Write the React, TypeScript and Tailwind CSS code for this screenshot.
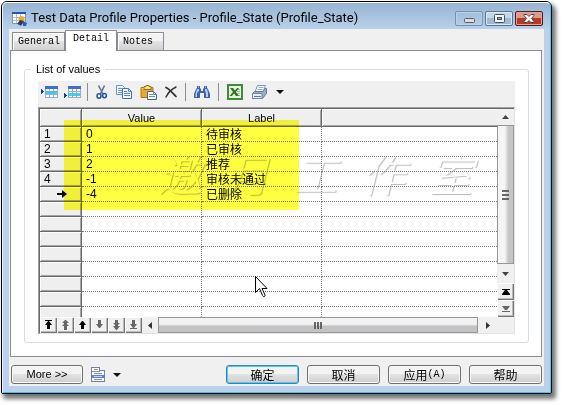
import React from 'react';

const rows: { head: string; value: string; label: string }[] = [
  { head: '1', value: '0', label: '待审核' },
  { head: '2', value: '1', label: '已审核' },
  { head: '3', value: '2', label: '推荐' },
  { head: '4', value: '-1', label: '审核未通过' },
  { head: 'current', value: '-4', label: '已删除' },
  ...Array.from({ length: 7 }, () => ({ head: '', value: '', label: '' })),
];

const latin = "font-['Liberation_Sans','Noto_Sans_CJK_SC',sans-serif]";
const headCell =
  'border-r border-b border-[#696969] bg-[#efefef] shadow-[inset_1px_1px_0_#fff,inset_-1px_-1px_0_#a5a5a5] p-0 font-normal';
const dotCell = 'border-b border-dotted border-[#7c7c7c] p-0 pl-1 whitespace-nowrap';

function GridIcon({ low }: { low?: boolean }) {
  return (
    <svg width="17" height="15" viewBox="0 0 17 15" shapeRendering="crispEdges">
      <rect x="4" y="1" width="12" height="12" fill="#fff" stroke="none" />
      <rect x="4" y="1" width="13" height="3" fill="#3f6fc8" />
      <rect x="4" y={low ? 8 : 6} width="12" height="3" fill="#35d8ee" />
      <path d="M4.5 4v9M8.5 4v9M12.5 4v9M16.5 4v9M4 6.5h12M4 9.5h12M4 12.5h13" stroke="#7c9bc8" strokeOpacity=".8" fill="none" />
      {low && <path d="M5 9.500h3M9 9.500h3M13 9.500h3" stroke="#35d8ee" />}
      <path d={low ? 'M0 8h1v1h1v1h1v1H2v1H1v1H0z' : 'M0 4h1v1h1v1h1v1H2v1H1v1H0z'} fill="#163e96" />
    </svg>
  );
}

function ScissorsIcon() {
  return (
    <svg width="12" height="14" viewBox="0 0 12 14" fill="none">
      <path d="M2.5 0.5 7 9M8.5 0.5 4.5 9" stroke="#60749a" strokeWidth="1.6" />
      <ellipse cx="3" cy="11" rx="2" ry="2.2" stroke="#2450a8" strokeWidth="1.5" />
      <ellipse cx="8.5" cy="10.6" rx="1.9" ry="2.2" stroke="#2450a8" strokeWidth="1.5" />
    </svg>
  );
}

function CopyIcon() {
  return (
    <svg width="16" height="14" viewBox="0 0 16 14" fill="none">
      <path d="M.5.5h6l2 2v7h-8z" fill="#eef5ff" stroke="#6b94d2" />
      <path d="M2 3.5h4M2 5.5h4M2 7.5h4" stroke="#6d98d8" />
      <path d="M6.500 3.500h6l3 3v7h-9z" fill="#fff" stroke="#4172ba" />
      <path d="M12.500 3.500v3h3M8 6.500h3M8 8.500h6M8 10.500h6" stroke="#5387d0" />
    </svg>
  );
}

function PasteIcon() {
  return (
    <svg width="17" height="15" viewBox="0 0 17 15" fill="none">
      <path d="M1 2.500h12v10H1z" fill="#e8a92c" stroke="#b37817" />
      <path d="M2 3.500h9" stroke="#ffdc75" />
      <path d="M4 1.500h2v-1h3v1h2v3H4z" fill="#f6e08a" stroke="#99701e" />
      <path d="M7.500 6.500h6l3 3v5h-9z" fill="#fff" stroke="#49658b" />
      <path d="M9 9.500h4M9 11.500h6M13.500 6.500v3h3" stroke="#6d86ad" />
    </svg>
  );
}

function DeleteIcon() {
  return (
    <svg width="12" height="12" viewBox="0 0 12 12" fill="none" stroke="#333" strokeLinecap="round">
      <path d="M1 1.500c4 2 7 6 10 9" strokeWidth="1.700" />
      <path d="M11 1C7 3 3 7 1 11" strokeWidth="1.500" />
    </svg>
  );
}

function BinocularsIcon() {
  return (
    <svg width="16" height="14" viewBox="0 0 16 14">
      <path d="M3 1h3v2l1 1v2h2V4l1-1V1h3v2l1 1 2 5v4h-6V8H6v5H0V9l2-5 1-1z" fill="#3e62a4" />
      <path d="M3 4h2v2L3 8v4H1.500V9zM11 4h2l1 4v4h-2V8l-1-2z" fill="#b4ccf2" />
      <path d="M4 1.500h1v1H4zM11 1.500h1v1h-1zM7 5h2v1H7z" fill="#dce9fc" />
    </svg>
  );
}

function SheetIcon() {
  return (
    <svg width="16" height="16" viewBox="0 0 16 16">
      <rect x="1" y="1" width="14" height="14" fill="#e7f3e2" stroke="#3f8a38" strokeWidth="2" />
      <path d="M9 4h4v8H9z" fill="#fff" />
      <path d="M10 5.500h3M10 7.500h3M10 9.500h3M10 11.500h3" stroke="#8cc083" />
      <path d="M3 4h3l2 2.500L10 4h2L9 8l3 4H9L7 9.500 5 12H2.500L6 8z" fill="#277a23" />
    </svg>
  );
}

function PrinterIcon() {
  return (
    <svg width="17" height="15" viewBox="0 0 17 15">
      <path d="M6.500.500h8L12 7H4z" fill="#fff" stroke="#7f94b8" />
      <path d="M7.500 2.500h5M6.500 4.500h5" stroke="#8fafdf" />
      <path d="M1.500 8.500l2-2H12l2-3h1.500v5l-4 5h-10z" fill="#9dadc9" stroke="#63779b" />
      <path d="M1.500 8.500H11v5H1.500z" fill="#e6edf8" stroke="#7486a6" />
      <path d="M3 11.500h7" stroke="#5b76a8" />
    </svg>
  );
}

function Caret() {
  return (
    <svg width="8" height="4" viewBox="0 0 8 4">
      <path d="M0 0h8L4 4z" fill="#111" />
    </svg>
  );
}

function AppIcon() {
  return (
    <svg width="15" height="15" viewBox="0 0 15 15">
      <path d="M.5 1.500h13v11H.5z" fill="#fff" stroke="#8296bd" />
      <path d="M0 1h14v2H0z" fill="#2456b0" />
      <path d="M1 6.500h12M1 9.500h12M4.500 3v9M8.500 3v9" stroke="#a9b9d6" />
      <path d="M6 13l2-4 3 3-2 3zM11 10l4 2-1 3h-3z" fill="#2c5daf" />
      <circle cx="9.500" cy="8" r="3" fill="#f2ac20" />
      <path d="M5 13l3-4 4 1-3 4z" fill="#333e50" />
    </svg>
  );
}

function DocIcon() {
  return (
    <svg width="14" height="15" viewBox="0 0 14 15" shapeRendering="crispEdges">
      <path d="M.5.5h8v3h5v11H.5z" fill="#fff" stroke="#6c83a8" />
      <path d="M3 2.500h4M3 6.500h8M3 12.500h8M1 4.500h8" stroke="#8793a6" />
      <path d="M1 8h12v3H1z" fill="#5b7df5" />
      <path d="M3 9.500h8" stroke="#cbd6ff" />
    </svg>
  );
}

function Separator() {
  return <span className="h-[18px] w-px bg-[#8d8d8d]" />;
}

function ToolButton({ name, children }: { name: string; children: React.ReactNode }) {
  return (
    <button type="button" aria-label={name} className="flex h-5 shrink-0 items-center justify-center">
      {children}
    </button>
  );
}

const navIcons: { name: string; d: string; tone: string }[] = [
  { name: 'First row', d: 'M1 0h7v1H5L8 5H6v4H3V5H1l3-4H1z', tone: '#000' },
  { name: 'Page up', d: 'M4 0h1l3 3H6v1l2 2H6v4H3V6H1l2-2V3H1z', tone: '#666' },
  { name: 'Row up', d: 'M4 1h1l3 4H6v4H3V5H1z', tone: '#000' },
  { name: 'Row down', d: 'M3 0h3v4h2L5 8H4L1 4h2z', tone: '#666' },
  { name: 'Page down', d: 'M3 0h3v3h2L6 5v1h2L5 10H4L1 6h2V5L1 3h2z', tone: '#666' },
  { name: 'Last row', d: 'M3 0h3v4h2L5 8h3v1H1V8h3L1 4h2z', tone: '#666' },
];

const raised =
  'flex items-center justify-center bg-[#f0f0f0] shadow-[inset_1px_1px_0_#fff,inset_-1px_-1px_0_#777,inset_-2px_-2px_0_#bbb]';

function DialogButton({ children, primary }: { children: React.ReactNode; primary?: boolean }) {
  return (
    <button
      type="button"
      className={
        "flex h-[19px] w-[73px] items-center justify-center rounded-[3px] border bg-linear-to-b from-[#f3f3f3] from-45% via-[#e2e2e2] via-50% to-[#cfcfcf] text-xs leading-none whitespace-nowrap text-black font-['Noto_Sans_CJK_SC',sans-serif] " +
        (primary
          ? 'border-[#3c7fb1] shadow-[inset_0_0_0_1px_#48d0f5]'
          : 'border-[#707070] shadow-[inset_0_0_0_1px_#f8f8f8]')
      }
    >
      {children}
    </button>
  );
}

function SideTab({ children }: { children: React.ReactNode }) {
  return (
    <button
      type="button"
      role="tab"
      aria-selected="false"
      className="h-[18px] border border-b-0 border-[#898c95] bg-linear-to-b from-[#f3f3f3] from-45% via-[#e4e4e4] via-50% to-[#d2d2d2] pr-1 pl-[5px] shadow-[inset_1px_1px_0_#fff]"
    >
      {children}
    </button>
  );
}

export default function App() {
  return (
    <div className={'bg-white pt-px pr-[11px] pb-[11px] pl-px text-black ' + latin}>
      <main className="rounded-t-md rounded-b-xs border border-black bg-[#b9d1ea] shadow-[3px_4px_4px_1px_#777]">
        <div className="rounded-t-[5px] border border-t-white border-r-[#28d0f0] border-b-[#28d0f0] border-l-[#e5f2fd] bg-linear-to-b from-[#98b4d2] to-[#b9d1ea] to-[26px] pr-[6px] pb-[6px] pl-[6px]">
          <header className="flex h-[26px] items-center justify-between pt-1 pr-px pl-[3px]">
            <h1 className="flex items-center gap-1 font-['Roboto',sans-serif] text-[13px] leading-4 whitespace-nowrap">
              <AppIcon />
              Test Data Profile Properties - Profile_State (Profile_State)
            </h1>
            <div className="flex gap-[2px]">
              <button type="button" aria-label="Minimize" className="flex h-[15px] w-7 items-center justify-center rounded-[2px] border border-[#7591b2] shadow-[inset_0_0_0_1px_#bdd2e8]">
                <svg width="11" height="5" viewBox="0 0 11 5" className="mt-1">
                  <rect x=".5" y=".5" width="10" height="4" rx="1" fill="#ddd" stroke="#555c66" />
                </svg>
              </button>
              <button type="button" aria-label="Maximize" className="flex h-[15px] w-7 items-center justify-center rounded-[2px] border border-[#587596] bg-linear-to-b from-[#c3d6ea] from-50% to-[#9eb9d5] to-50% shadow-[inset_0_0_0_1px_#dceaf7]">
                <svg width="11" height="9" viewBox="0 0 11 9">
                  <rect x=".5" y=".5" width="10" height="8" rx="1" fill="#f5f5f5" stroke="#48505c" />
                  <rect x="3.500" y="3.500" width="4" height="2" fill="#91adcd" stroke="#48505c" />
                </svg>
              </button>
              <button type="button" aria-label="Close" className="flex h-[15px] w-7 items-center justify-center rounded-[2px] border border-[#4c1c20] bg-linear-to-b from-[#dc9a8d] from-50% to-[#b93a22] to-50% shadow-[inset_0_0_0_1px_#e2a494]">
                <svg width="12" height="9" viewBox="0 0 12 9">
                  <path d="M1 .5h3l2 2 2-2h3v1l-2.500 3L11 7.500v1H8l-2-2-2 2H1v-1l2.500-3L1 1.500z" fill="#fff" stroke="#554048" />
                </svg>
              </button>
            </div>
          </header>

          <div className="bg-[#f0f0f0] pr-[2px] pl-px">
            <div role="tablist" className="flex h-[21px] items-end pl-[2px] font-['Liberation_Mono',monospace] text-[10px] leading-4">
              <SideTab>General</SideTab>
              <button type="button" role="tab" aria-selected="true" className="relative -mb-px h-[21px] border border-b-0 border-[#898c95] bg-white px-[7px] pb-1">
                Detail
              </button>
              <SideTab>Notes&nbsp;</SideTab>
            </div>

            <section className="border border-[#898c95] bg-white pt-[11px] pr-[12px] pb-[13px] pl-[13px]">
              <fieldset className="min-w-0 rounded-[3px] border border-[#d3dee8] px-[13px] pb-[8px]">
                <legend className="-ml-[7px] px-[5px] text-[11px] leading-[14px]">List of values</legend>

                <div className="mt-[5px] flex h-[26px] items-center gap-2 bg-[#f0f0f0] pb-1 pl-[3px]">
                  <div className="flex items-center gap-[6px]">
                    <ToolButton name="Insert row"><GridIcon /></ToolButton>
                    <ToolButton name="Add row"><GridIcon low /></ToolButton>
                    <Separator />
                  </div>
                  <ToolButton name="Cut"><ScissorsIcon /></ToolButton>
                  <ToolButton name="Copy"><CopyIcon /></ToolButton>
                  <ToolButton name="Paste"><PasteIcon /></ToolButton>
                  <ToolButton name="Delete"><DeleteIcon /></ToolButton>
                  <Separator />
                  <ToolButton name="Find"><BinocularsIcon /></ToolButton>
                  <Separator />
                  <ToolButton name="Export to spreadsheet"><SheetIcon /></ToolButton>
                  <ToolButton name="Print"><PrinterIcon /></ToolButton>
                  <ToolButton name="Print options"><Caret /></ToolButton>
                </div>

                <div className="relative border-t border-r border-l border-t-[#a0a0a0] border-r-[#e3e3e3] border-l-[#a0a0a0]">
                  <div className="flex border-t border-l border-[#696969]">
                    <div className="relative isolate min-w-0 flex-1">
                      <div aria-hidden="true" className="absolute top-[36px] right-6 left-[118px] -z-10 flex justify-between font-['Noto_Sans_CJK_SC',sans-serif] text-[44px] leading-[56px] font-light text-white italic [text-shadow:1px_1px_1px_#bbb]">
                        <span>邀</span><span>月</span><span>工</span><span>作</span><span>室</span>
                      </div>
                      <table className="w-full table-fixed border-separate border-spacing-0 text-xs leading-[14px]">
                        <colgroup>
                          <col className="w-[42px]" />
                          <col className="w-[120px]" />
                          <col className="w-[120px]" />
                          <col />
                        </colgroup>
                        <thead>
                          <tr className="h-[18px] text-[11px]">
                            <th className={headCell} aria-label="Row" />
                            <th className={headCell}>Value</th>
                            <th className={headCell}>Label</th>
                            <th className="border-b border-[#696969] bg-[#efefef] p-0 shadow-[inset_1px_1px_0_#fff,inset_0_-1px_0_#a5a5a5]" />
                          </tr>
                        </thead>
                        <tbody>
                          {rows.map((row, i) => (
                            <tr key={i} className="h-[15px]">
                              <th scope="row" className={headCell + ' pl-1 text-left'}>
                                {row.head === 'current' ? (
                                  <svg width="10" height="8" viewBox="0 0 10 8" className="ml-[13px]">
                                    <path d="M0 3h5V0l5 4-5 4V5H0z" fill="#000" />
                                  </svg>
                                ) : (
                                  row.head
                                )}
                              </th>
                              <td className={dotCell + ' border-r'}>{row.value}</td>
                              <td className={dotCell + " border-r font-['Noto_Sans_CJK_SC',sans-serif]"}>{row.label}</td>
                              <td className={dotCell} />
                            </tr>
                          ))}
                          <tr className="h-[10px]">
                            <th className="border-r border-[#696969] bg-[#efefef] p-0 shadow-[inset_1px_1px_0_#fff,inset_-1px_0_0_#a5a5a5]" />
                            <td className="border-r border-dotted border-[#7c7c7c] p-0" />
                            <td className="border-r border-dotted border-[#7c7c7c] p-0" />
                            <td className="p-0" />
                          </tr>
                        </tbody>
                      </table>
                    </div>

                    <div className="flex w-[17px] flex-col bg-[#f0f0f0]">
                      <button type="button" aria-label="Scroll up" className="flex h-4 items-center justify-center">
                        <svg width="7" height="4" viewBox="0 0 7 4"><path d="M0 4h7L3.500 0z" fill="#444" /></svg>
                      </button>
                      <div className="flex flex-1 flex-col items-center justify-center gap-[2px] border border-[#979797] bg-linear-to-r from-[#f5f5f5] from-45% to-[#c5c5c8] to-70%">
                        <span className="h-[2px] w-[7px] bg-[#666]" />
                        <span className="h-[2px] w-[7px] bg-[#666]" />
                        <span className="h-[2px] w-[7px] bg-[#666]" />
                      </div>
                      <button type="button" aria-label="Scroll down" className="flex h-[19px] items-center justify-center">
                        <svg width="7" height="4" viewBox="0 0 7 4"><path d="M0 0h7L3.500 4z" fill="#444" /></svg>
                      </button>
                      <button type="button" aria-label="Go to top" className={raised + ' h-[17px]'}>
                        <svg width="8" height="6" viewBox="0 0 8 6"><path d="M0 0h8v1H5l3 4v1H0V5l3-4H0z" fill="#000" /></svg>
                      </button>
                      <button type="button" aria-label="Go to bottom" className={raised + ' h-[17px]'}>
                        <svg width="8" height="6" viewBox="0 0 8 6"><path d="M0 0h8L5 4H3zM0 5h8v1H0z" fill="#666" /></svg>
                      </button>
                    </div>
                  </div>

                  <div className="flex h-[17px] border-b border-b-[#e3e3e3] border-l border-l-[#696969] bg-[#f0f0f0]">
                    {navIcons.map((icon) => (
                      <button key={icon.name} type="button" aria-label={icon.name} className={raised + ' w-[17px] shrink-0'}>
                        <svg width="9" height="10" viewBox="0 0 9 10"><path d={icon.d} fill={icon.tone} /></svg>
                      </button>
                    ))}
                    <button type="button" aria-label="Scroll left" className="flex w-4 items-center justify-center">
                      <svg width="4" height="7" viewBox="0 0 4 7"><path d="M4 0v7L0 3.500z" fill="#333" /></svg>
                    </button>
                    <div className="flex flex-1 items-center justify-center gap-px border border-[#979797] bg-linear-to-b from-[#f2f2f2] from-45% to-[#c3c3c6] to-60%">
                      <span className="h-[7px] w-[2px] bg-[#666]" />
                      <span className="h-[7px] w-[2px] bg-[#666]" />
                      <span className="h-[7px] w-[2px] bg-[#666]" />
                    </div>
                    <button type="button" aria-label="Scroll right" className="flex w-[19px] items-center justify-center">
                      <svg width="4" height="7" viewBox="0 0 4 7"><path d="M0 0v7l4-3.500z" fill="#333" /></svg>
                    </button>
                    <span className="w-[17px]" />
                  </div>

                  {/* highlighter mark across the filled rows */}
                  <div className="pointer-events-none absolute top-3 left-[25px] h-[90px] w-[235px] bg-[#ffff40] mix-blend-multiply" />
                  <svg width="13" height="22" viewBox="0 0 13 22" className="absolute top-[168px] left-[216px]">
                    <path d="M.5.5v16l4-4 3 7c1 2 3 1 2.500-.5L7 12.500h5z" fill="#fff" stroke="#000" />
                  </svg>
                </div>
              </fieldset>
            </section>

            <footer className="flex items-center justify-between pt-[8px] pb-[2px] pl-px">
              <div className="flex items-center gap-2">
                <button type="button" className="h-[19px] w-[72px] rounded-[3px] border border-[#707070] bg-linear-to-b from-[#f3f3f3] from-45% via-[#e2e2e2] via-50% to-[#cfcfcf] text-[11px] leading-none whitespace-nowrap shadow-[inset_0_0_0_1px_#f8f8f8]">
                  More &gt;&gt;
                </button>
                <button type="button" aria-label="Document options" className="flex items-center gap-2">
                  <DocIcon />
                  <Caret />
                </button>
              </div>
              <div className="flex gap-2">
                <DialogButton primary>确定</DialogButton>
                <DialogButton>取消</DialogButton>
                <DialogButton>
                  应用<span className="font-['Liberation_Mono',monospace] text-[10px]">(A)</span>
                </DialogButton>
                <DialogButton>帮助</DialogButton>
              </div>
            </footer>
          </div>
        </div>
      </main>
    </div>
  );
}
